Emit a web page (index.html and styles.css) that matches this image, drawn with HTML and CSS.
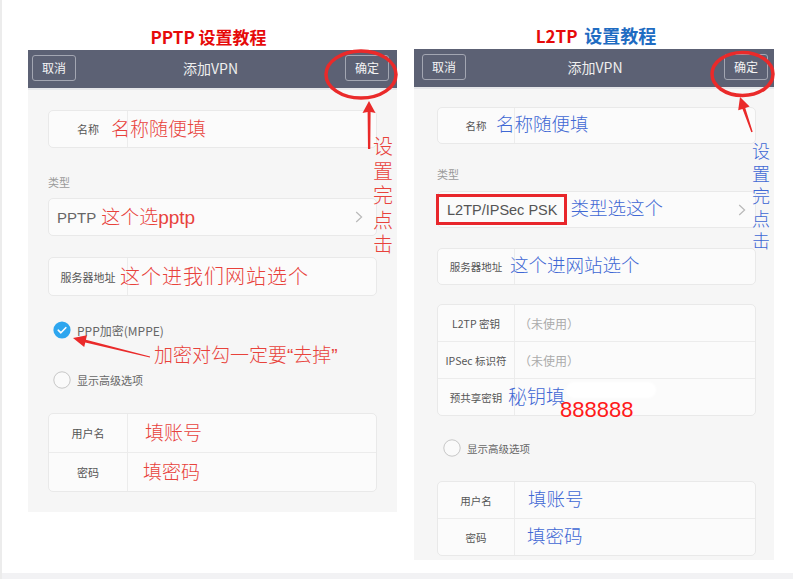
FILE: index.html
```html
<!DOCTYPE html>
<html lang="zh-CN">
<head>
<meta charset="utf-8">
<title>PPTP / L2TP 设置教程</title>
<link rel="stylesheet" href="styles.css">
</head>
<body>
<main class="page">
  <section class="col col-l">
    <h2 class="title title-l">PPTP 设置教程</h2>
    <div class="panel">
      <header class="bar bar-l">
        <span class="btn">取消</span>
        <span class="bar-title">添加VPN</span>
        <span class="btn">确定</span>
      </header>
      <div class="body body-l">
        <div class="card field c-name-l">
          <span class="lbl">名称</span><span class="val"></span>
          <span class="note red fs19 ln-name">名称随便填</span>
        </div>
        <div class="sec sec-l">类型</div>
        <div class="card select c-sel-l">
          <span class="sel-text">PPTP</span>
          <span class="inote red fs19 in-pptp">这个选pptp</span>
          <svg class="chev" width="8" height="12" viewBox="0 0 8 12"><polyline points="1.2,1 6.6,6 1.2,11" fill="none" stroke="#b9b9b9" stroke-width="1.2"/></svg>
        </div>
        <div class="card field c-srv-l">
          <span class="lbl">服务器地址</span><span class="val"></span>
          <span class="note red fs21 ln-srv">这个进我们网站选个</span>
        </div>
        <div class="opt opt-l opt-check">
          <svg class="dot" width="18" height="18" viewBox="0 0 18 18"><circle cx="9" cy="9" r="8.6" fill="#2ea6ef"/><polyline points="5.2,9.2 7.9,11.8 12.8,6.7" fill="none" stroke="#fff" stroke-width="1.6" stroke-linecap="round" stroke-linejoin="round"/></svg>
          <span class="opt-text fs12">PPP加密(MPPE)</span>
        </div>
        <div class="opt opt-l opt-adv-l">
          <svg class="dot" width="18" height="18" viewBox="0 0 18 18"><circle cx="9" cy="9" r="8.2" fill="#fafafa" stroke="#c6c6c6" stroke-width="1"/></svg>
          <span class="opt-text">显示高级选项</span>
        </div>
        <div class="card tbl tbl-l">
          <div class="trow">
            <span class="lbl">用户名</span><span class="val"></span>
            <span class="note red fs19 ln-user">填账号</span>
          </div>
          <div class="trow">
            <span class="lbl">密码</span><span class="val"></span>
            <span class="note red fs19 ln-pass">填密码</span>
          </div>
        </div>
      </div>
    </div>
    <div class="overlay">
      <svg class="ov-svg" width="369" height="573" viewBox="0 0 369 573">
        <ellipse cx="333" cy="74.5" rx="35" ry="23.5" fill="none" stroke="#ea2a2a" stroke-width="3.5"/>
        <polygon points="341,101 347.5,113 342.6,112 342.3,149 340,149 339.6,112 334.5,113" fill="#ea2a2a"/>
        <polygon points="45,338 59,335.3 57.9,339.7 122.1,356.4 121.9,357.6 57.3,342.5 56.2,346.9" fill="#ea2a2a"/>
      </svg>
      <div class="vtext vtext-l">设置完点击</div>
      <div class="free-note">加密对勾一定要“去掉”</div>
    </div>
  </section>

  <section class="col col-r">
    <h2 class="title title-r"><span class="t-red">L2TP</span> <span class="t-blue">设置教程</span></h2>
    <div class="panel">
      <header class="bar bar-r">
        <span class="btn">取消</span>
        <span class="bar-title">添加VPN</span>
        <span class="btn">确定</span>
      </header>
      <div class="body body-r">
        <div class="card field field-r c-name-r">
          <span class="lbl">名称</span><span class="val"></span>
          <span class="note blue fs18 rn-name">名称随便填</span>
        </div>
        <div class="sec sec-r">类型</div>
        <div class="card select c-sel-r">
          <span class="psk-box">L2TP/IPSec PSK</span>
          <span class="inote blue fs18 in-type">类型选这个</span>
          <svg class="chev chev-r" width="8" height="12" viewBox="0 0 8 12"><polyline points="1.2,1 6.6,6 1.2,11" fill="none" stroke="#b9b9b9" stroke-width="1.2"/></svg>
        </div>
        <div class="card field field-r c-srv-r">
          <span class="lbl">服务器地址</span><span class="val"></span>
          <span class="note blue fs18 rn-srv">这个进网站选个</span>
        </div>
        <div class="card tbl tbl-r tbl-secret">
          <div class="trow">
            <span class="lbl">L2TP 密钥</span><span class="val muted">（未使用）</span>
          </div>
          <div class="trow">
            <span class="lbl">IPSec 标识符</span><span class="val muted">（未使用）</span>
          </div>
          <div class="trow">
            <span class="lbl">预共享密钥</span><span class="val"></span>
            <span class="note blue fs19 rn-psk">秘钥填</span>
          </div>
        </div>
        <div class="opt opt-r">
          <svg class="dot" width="18" height="18" viewBox="0 0 18 18"><circle cx="9" cy="9" r="8.2" fill="#fafafa" stroke="#c6c6c6" stroke-width="1"/></svg>
          <span class="opt-text fs105">显示高级选项</span>
        </div>
        <div class="card tbl tbl-r tbl-acct">
          <div class="trow">
            <span class="lbl">用户名</span><span class="val"></span>
            <span class="note blue fs18 rn-user">填账号</span>
          </div>
          <div class="trow">
            <span class="lbl">密码</span><span class="val"></span>
            <span class="note blue fs18 rn-pass">填密码</span>
          </div>
        </div>
      </div>
    </div>
    <div class="overlay">
      <div class="blob"></div>
      <svg class="ov-svg" width="360" height="573" viewBox="0 0 360 573">
        <ellipse cx="328.5" cy="74" rx="30.5" ry="21.5" fill="none" stroke="#ea2a2a" stroke-width="3.5"/>
        <polygon points="326,97 335.6,106.5 331.3,107.9 338.7,131.8 337.3,132.2 328.5,108.9 324.2,110.3" fill="#ea2a2a"/>
      </svg>
      <div class="vtext vtext-r">设置完点击</div>
      <div class="code">888888</div>
    </div>
  </section>
</main>
<div class="strip"></div>
</body>
</html>
```

FILE: styles.css
```css
* { box-sizing: border-box; margin: 0; padding: 0; }

html, body {
  width: 793px;
  height: 579px;
  overflow: hidden;
  background: #fff;
}

body {
  font-family: "Noto Sans CJK SC", "Liberation Sans", sans-serif;
  border-left: 2px solid #ececec;
  display: flex;
  flex-direction: column;
}

.page {
  height: 573px;
  display: flex;
  align-items: flex-start;
  gap: 17px;
  padding-left: 26px;
}

.strip {
  height: 6px;
  background: #f2f2f4;
}

.col { position: relative; }
.col-l { width: 369px; padding-top: 27px; }
.col-r { width: 360px; padding-top: 25px; }

.title {
  font-size: 17px;
  line-height: 20px;
  font-weight: 700;
  text-align: center;
  margin-bottom: 3px;
}
.title-l { color: #e60a0a; margin-right: 8px; }
.title-r { white-space: nowrap; padding-left: 4px; }
.t-red { color: #e60a0a; margin-right: 3px; }
.t-blue { color: #1f6cc2; font-size: 18px; }

/* ---------- header bar ---------- */
.bar {
  height: 40px;
  background: #5c6174;
  border-bottom: 2px solid #e6e7ea;
  display: flex;
  align-items: center;
  justify-content: space-between;
  padding-bottom: 3px;
}
.bar-l { padding-left: 4px; padding-right: 8px; }
.bar-r { padding-left: 8px; padding-right: 6px; }

.btn {
  width: 44px;
  height: 26px;
  border: 1px solid #a3a6b2;
  border-radius: 3px;
  color: #f4f4f4;
  font-size: 12px;
  display: flex;
  align-items: center;
  justify-content: center;
}
.bar-title {
  color: #eeeeee;
  font-size: 14px;
}

/* ---------- panel body ---------- */
.body {
  background: #f6f6f6;
  display: flex;
  flex-direction: column;
}
.body-l { padding: 20px 20px 20px 20px; }
.body-r { padding: 18px 18px 4px 23px; }

.card {
  position: relative;
  background: #fbfbfb;
  border: 1px solid #e9e9e9;
  border-radius: 5px;
}

.field {
  display: grid;
  grid-template-columns: 79px 1fr;
}
.field-r { grid-template-columns: 77px 1fr; }

.lbl {
  display: flex;
  align-items: center;
  justify-content: center;
  font-size: 11px;
  color: #555;
  border-right: 1px solid #ececec;
  white-space: nowrap;
}
.body-r .lbl { font-size: 10.5px; }

.val {
  display: flex;
  align-items: center;
}
.muted {
  color: #ababab;
  font-size: 12px;
  padding-left: 4px;
}

.c-name-l { height: 38px; }
.sec {
  font-size: 11px;
  line-height: 14px;
  color: #9a9a9a;
}
.sec-l { margin-top: 27px; }
.c-sel-l { height: 38px; margin-top: 9px; }
.c-srv-l { height: 39px; margin-top: 21px; }

.c-name-r { height: 37px; }
.sec-r { margin-top: 23px; }
.c-sel-r { height: 37px; margin-top: 10px; }
.c-srv-r { height: 37px; margin-top: 20px; }

.select {
  display: flex;
  align-items: center;
}
.c-sel-l { padding-left: 8px; padding-right: 13px; }
.c-sel-r { padding-right: 9px; }

.sel-text {
  font-family: "Liberation Sans", sans-serif;
  font-size: 15px;
  color: #666;
}
.psk-box {
  font-family: "Liberation Sans", sans-serif;
  font-size: 14.5px;
  color: #555;
  height: 31px;
  border: 3px solid #e8262b;
  padding: 0 7px 0 8px;
  margin-left: -2px;
  display: flex;
  align-items: center;
  white-space: nowrap;
}
.chev { margin-left: auto; }

/* options */
.opt {
  height: 20px;
  display: flex;
  align-items: center;
  gap: 6px;
  color: #666;
  font-size: 11px;
}
.opt-l .dot { margin-left: 5px; }
.opt-r .dot { margin-left: 6px; }
.opt-check { margin-top: 24px; }
.opt-adv-l { margin-top: 30px; }
.opt-r { margin-top: 22px; }
.fs12 { font-size: 12px; }
.fs105 { font-size: 10.5px; }

/* tables */
.tbl { display: flex; flex-direction: column; }
.trow {
  position: relative;
  display: grid;
  grid-template-columns: 79px 1fr;
}
.tbl-r .trow { grid-template-columns: 77px 1fr; }
.trow + .trow { border-top: 1px solid #ececec; }

.tbl-l { margin-top: 23px; }
.tbl-l .trow { height: 38px; }
.tbl-l .trow + .trow { height: 39px; }

.tbl-secret { margin-top: 19px; }
.tbl-secret .trow { height: 36px; }
.tbl-secret .trow + .trow { height: 37px; }

.tbl-acct { margin-top: 23px; }
.tbl-acct .trow { height: 36px; }
.tbl-acct .trow + .trow { height: 37px; }

/* annotations */
.red { color: #e8423b; }
.blue { color: #3f68d4; }
.fs18 { font-size: 18.5px; }
.fs19 { font-size: 19px; }
.fs21 { font-size: 20px; letter-spacing: 1px; }

.note {
  position: absolute;
  top: 0;
  bottom: 0;
  display: flex;
  align-items: center;
  line-height: 1;
  white-space: nowrap;
  font-weight: 300;
  font-family: "Liberation Sans", "Noto Sans CJK SC", sans-serif;
}
.inote {
  line-height: 1;
  white-space: nowrap;
  font-weight: 300;
  font-family: "Liberation Sans", "Noto Sans CJK SC", sans-serif;
}
.in-pptp { margin-left: 5px; }
.in-type { margin-left: 3px; }

.ln-name { left: 62px; }
.ln-srv { left: 71px; }
.ln-user { left: 96px; }
.ln-pass { left: 94px; }

.rn-name { left: 58px; }
.rn-srv { left: 72px; }
.rn-psk { left: 70px; }
.rn-user { left: 90px; }
.rn-pass { left: 89px; }

/* overlays */
.overlay {
  position: absolute;
  inset: 0;
  pointer-events: none;
}
.ov-svg {
  position: absolute;
  left: 0;
  top: 0;
  overflow: visible;
}
.vtext {
  position: absolute;
  word-break: break-all;
  font-weight: 300;
  font-family: "Noto Sans CJK SC", sans-serif;
}
.vtext-l {
  left: 345px;
  top: 134px;
  width: 20px;
  font-size: 20px;
  line-height: 24.5px;
  color: #e8423b;
}
.vtext-r {
  left: 338px;
  top: 139px;
  width: 18px;
  font-size: 18px;
  line-height: 22.5px;
  color: #3f68d4;
}
.free-note {
  position: absolute;
  left: 126px;
  top: 346px;
  font-size: 19px;
  line-height: 19px;
  font-weight: 300;
  color: #e8423b;
  white-space: nowrap;
  font-family: "Liberation Sans", "Noto Sans CJK SC", sans-serif;
}
.blob {
  position: absolute;
  left: 152px;
  top: 382px;
  width: 90px;
  height: 16px;
  background: #fff;
  border-radius: 8px;
  filter: blur(1px);
}
.code {
  position: absolute;
  left: 146px;
  top: 399px;
  font-family: "Liberation Sans", sans-serif;
  font-size: 22px;
  line-height: 22px;
  color: #ff1a1a;
}
```
